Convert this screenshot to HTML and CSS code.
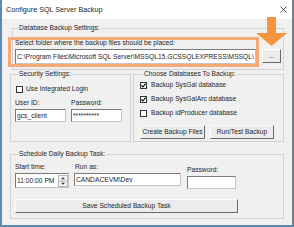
FILE: index.html
```html
<!DOCTYPE html>
<html>
<head>
<meta charset="utf-8">
<link rel="stylesheet" href="styles.css">
</head>
<body>
<div class="window">
  <div class="titlebar">
    <span class="title">Configure SQL Server Backup</span>
    <svg class="close" viewBox="0 0 7 7"><path d="M0.5 0.5 L6.5 6.5 M6.5 0.5 L0.5 6.5" stroke="#222" stroke-width="0.8" fill="none"/></svg>
  </div>
  <div class="content">
    <fieldset class="group group-db">
      <legend>Database Backup Settings:</legend>
      <div class="label">Select folder where the backup files should be placed:</div>
      <div class="db-row">
        <div class="textbox path">C:\Program Files\Microsoft SQL Server\MSSQL15.GCSSQLEXPRESS\MSSQL\</div>
        <button class="button browse">...</button>
      </div>
    </fieldset>
    <div class="mid-row">
      <fieldset class="group group-sec">
        <legend>Security Settings:</legend>
        <div class="check-row sec-check">
          <span class="checkbox"></span>
          <span class="label">Use Integrated Login</span>
        </div>
        <div class="cred-grid">
          <div class="field">
            <div class="label">User ID:</div>
            <div class="textbox small">gcs_client</div>
          </div>
          <div class="field">
            <div class="label">Password:</div>
            <div class="textbox small stars">**********</div>
          </div>
        </div>
      </fieldset>
      <fieldset class="group group-choose">
        <legend>Choose Databases To Backup:</legend>
        <div class="check-row db-check">
          <span class="checkbox"><svg viewBox="0 0 5 5"><polyline points="0.4,2.4 1.9,4 4.6,0.7" fill="none" stroke="#000" stroke-width="1.1"/></svg></span>
          <span class="label">Backup SysGal database</span>
        </div>
        <div class="check-row db-check">
          <span class="checkbox"><svg viewBox="0 0 5 5"><polyline points="0.4,2.4 1.9,4 4.6,0.7" fill="none" stroke="#000" stroke-width="1.1"/></svg></span>
          <span class="label">Backup SysGalArc database</span>
        </div>
        <div class="check-row db-check">
          <span class="checkbox"></span>
          <span class="label">Backup idProducer database</span>
        </div>
        <div class="choose-buttons">
          <button class="button create">Create Backup Files</button>
          <button class="button runtest">Run/Test Backup</button>
        </div>
      </fieldset>
    </div>
    <fieldset class="group group-sched">
      <legend>Schedule Daily Backup Task:</legend>
      <div class="sched-grid">
        <div class="field col-time">
          <div class="label">Start time:</div>
          <div class="textbox timebox">
            <span>11:00:00 PM</span>
            <svg class="spinner" viewBox="0 0 10 12">
              <rect x="0.5" y="0.5" width="9" height="11" fill="#f4f4f4" stroke="#b5b5b5"/>
              <line x1="0.5" y1="6" x2="9.5" y2="6" stroke="#b5b5b5"/>
              <polygon points="3,4.2 7,4.2 5,2.2" fill="#333"/>
              <polygon points="3,7.8 7,7.8 5,9.8" fill="#333"/>
            </svg>
          </div>
        </div>
        <div class="field col-run">
          <div class="label run-label">Run as:</div>
          <div class="textbox runbox">CANDACEVM\Dev</div>
        </div>
        <div class="field col-pw">
          <div class="label">Password:</div>
          <div class="textbox pwbox"></div>
        </div>
      </div>
      <button class="button save">Save Scheduled Backup Task</button>
    </fieldset>
  </div>
  <div class="highlight"></div>
  <svg class="arrow" viewBox="0 0 34 30"><polygon points="12,0 21,0 21,16 32,16 16.5,29 1,16 12,16" fill="#f7953f"/></svg>
</div>
</body>
</html>
```

FILE: styles.css
```css
* { box-sizing: border-box; }

body {
  margin: 0;
  background: #f0f0f0;
}

.window {
  position: relative;
  width: 294px;
  height: 227px;
  background: #f0f0f0;
  border-left: 2px solid #5b8bb2;
  border-right: 2px solid #737f8a;
  border-bottom: 2px solid #5d8ab0;
  font-family: "Liberation Sans", Arial, sans-serif;
  font-size: 6.7px;
  color: #1e1e1e;
  overflow: hidden;
}

.titlebar {
  height: 19px;
  background: #fff;
  display: flex;
  align-items: center;
  justify-content: space-between;
  padding: 0 5px 0 4px;
}

.title {
  font-size: 7.2px;
  line-height: 9px;
}

.close {
  width: 7px;
  height: 7px;
}

.content {
  padding: 5px 8px 0 8px;
}

.group {
  margin: 0;
  padding: 0;
  border: 1px solid #d2d2d2;
  min-width: 0;
}

.group legend {
  padding: 0 1px;
  margin-left: 3px;
  line-height: 8px;
  height: 8px;
}

.label {
  line-height: 8px;
  height: 8px;
  white-space: nowrap;
}

.textbox {
  background: #fff;
  border: 1px solid;
  border-color: #7a7a7a #c4c4c4 #c4c4c4 #7a7a7a;
  padding-left: 1px;
  white-space: nowrap;
  overflow: hidden;
  display: flex;
  align-items: center;
  line-height: 8px;
}

.button {
  font: inherit;
  color: #1e1e1e;
  background: #ececec;
  border: 1px solid;
  border-color: #fcfcfc #6a6a6a #6a6a6a #fcfcfc;
  padding: 0;
  margin: 0;
  display: flex;
  align-items: center;
  justify-content: center;
  line-height: 8px;
  white-space: nowrap;
}

/* Database group */
.group-db {
  margin-left: 2px;
  padding: 7px 0 5px 2px;
}

.db-row {
  display: flex;
  gap: 6px;
  margin-top: 2px;
  align-items: flex-start;
}

.path {
  width: 241px;
  height: 15px;
}

.browse {
  width: 19px;
  height: 14px;
}

/* middle row */
.mid-row {
  display: flex;
  gap: 2px;
  height: 72px;
}

.group-sec {
  width: 121px;
  padding: 7px 0 0 4px;
}

.group-choose {
  width: 151px;
  padding: 3px 0 0 6px;
}

.check-row {
  display: flex;
  align-items: center;
  height: 8px;
}

.checkbox {
  width: 7px;
  height: 7px;
  border: 1px solid #333;
  background: #fff;
  flex: none;
  display: flex;
}

.checkbox svg {
  width: 5px;
  height: 5px;
}

.sec-check {
  gap: 3px;
  padding-left: 1px;
}

.db-check {
  gap: 4px;
}

.db-check + .db-check {
  margin-top: 6px;
}

.cred-grid {
  display: grid;
  grid-template-columns: 51px 51px;
  column-gap: 5px;
  margin-top: 6px;
}

.field .textbox {
  margin-top: 2px;
}

.small {
  height: 13px;
}

.stars {
  align-items: flex-start;
  padding-top: 2px;
}

.choose-buttons {
  display: flex;
  gap: 5px;
  margin-top: 8px;
}

.create {
  width: 65px;
  height: 14px;
}

.runtest {
  width: 64px;
  height: 14px;
}

/* schedule group */
.group-sched {
  margin-top: 8px;
  height: 69px;
  padding: 5px 0 0 4px;
}

.sched-grid {
  display: flex;
  align-items: flex-start;
}

.col-time {
  width: 54px;
}

.col-run {
  width: 107px;
  margin-left: 5px;
}

.run-label {
  padding-left: 1px;
}

.col-pw {
  width: 49px;
  margin-left: 6px;
  margin-top: 3px;
}

.timebox {
  height: 15px;
  justify-content: space-between;
  padding-left: 1px;
}

.spinner {
  width: 10px;
  height: 12px;
  flex: none;
}

.runbox {
  height: 13px;
}

.pwbox {
  height: 13px;
}

.save {
  width: 223px;
  height: 14px;
  margin-top: 10px;
}

/* annotation overlays */
.highlight {
  position: absolute;
  left: 6px;
  top: 37px;
  width: 251px;
  height: 30px;
  border: 3px solid #f5aa76;
}

.arrow {
  position: absolute;
  left: 253px;
  top: 17px;
  width: 34px;
  height: 30px;
}
```
